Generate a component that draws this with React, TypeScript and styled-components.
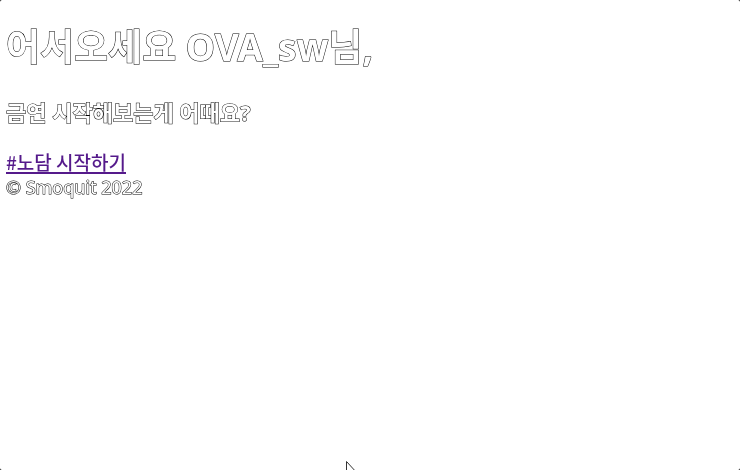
import React from "react";
import styled, { createGlobalStyle } from "styled-components";

const GlobalStyle = createGlobalStyle`
  * { box-sizing: border-box; }
  body {
    margin: 0;
    background: #000;
    color: #fff;
    font-family: "Noto Sans", "Noto Sans CJK KR", sans-serif;
  }
`;

const Page = styled.div`
  position: relative;
  min-height: 100vh;
  padding: 22px 6px 6px;
  border-radius: 2px;
  background: #fff;
  overflow: hidden;
`;

const outline = `
  color: #fff;
  paint-order: stroke fill;
  -webkit-text-stroke: 1px #000;
  will-change: opacity;
`;

const Title = styled.h1`
  margin: 0;
  font-size: 37px;
  line-height: 50px;
  font-weight: 700;
  ${outline}
`;

const Subtitle = styled.h2`
  margin: 24px 0 22px;
  font-size: 22px;
  line-height: 32px;
  font-weight: 700;
  ${outline}
`;

const StartLink = styled.a`
  color: #551a8b;
  font-family: "Noto Sans CJK KR", "Noto Sans", sans-serif;
  font-size: 19px;
  font-weight: 500;
  line-height: 24px;
  text-decoration-thickness: 2px;
  text-decoration-skip-ink: none;
  text-underline-offset: 2px;
  will-change: opacity;
`;

const Footer = styled.footer`
  font-size: 18px;
  line-height: 24px;
  ${outline}
`;

const Cursor = styled.svg`
  position: absolute;
  left: 346px;
  bottom: -10px;
`;

export default function App() {
  return (
    <>
      <GlobalStyle />
      <Page>
        <main>
          <Title>어서오세요 OVA_sw님,</Title>
          <Subtitle>금연 시작해보는게 어때요?</Subtitle>
          <StartLink href="#start">#노담 시작하기</StartLink>
        </main>
        <Footer>© Smoquit 2022</Footer>
        <Cursor width="12" height="19" viewBox="0 0 12 19" aria-hidden="true">
          <path d="M.5.5v16l4-4 3 6 2-1-3-5h5z" fill="#fff" stroke="#333" />
        </Cursor>
      </Page>
    </>
  );
}
